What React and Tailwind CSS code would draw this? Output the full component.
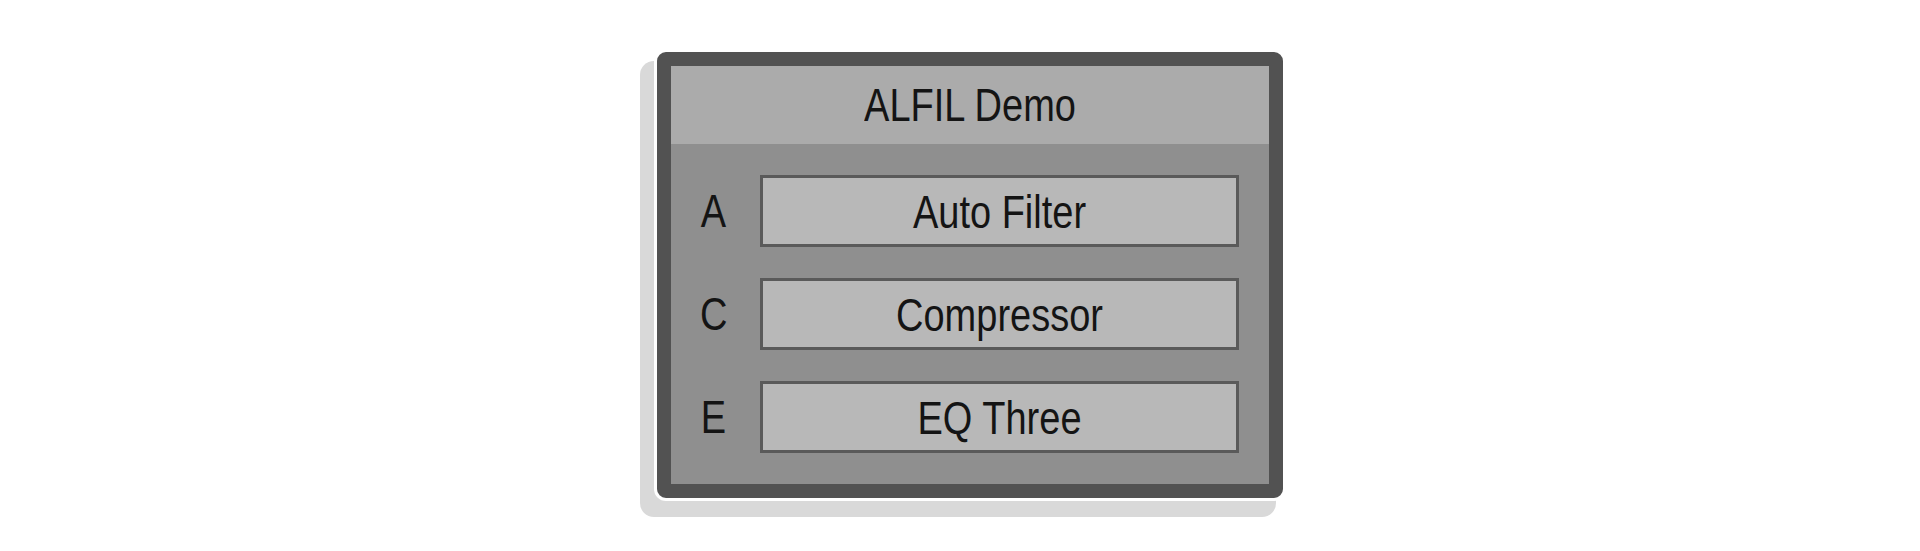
const FX_SLOTS = [
  { key: 'A', name: 'Auto Filter' },
  { key: 'C', name: 'Compressor' },
  { key: 'E', name: 'EQ Three' },
]

function Label({ children, className = '' }) {
  return (
    <span className={`inline-block origin-center scale-y-[1.2] leading-none ${className}`}>
      {children}
    </span>
  )
}

export default function App() {
  return (
    <div
      className="h-[551px] w-full bg-white pl-[657px] pt-[52px] text-[#141414]"
      style={{ fontFamily: '"Liberation Sans", Arial, sans-serif' }}
    >
      <div className="flex h-[446px] w-[626px] flex-col rounded-[9px] border-[14px] border-[#525252] shadow-[0_0_0_3px_#ffffff,-12px_14px_0_5px_#d9d9d9]">
        <div className="flex h-[78px] shrink-0 items-center justify-center bg-[#ababab] text-[38px]">
          <Label>ALFIL Demo</Label>
        </div>
        <div className="flex flex-1 flex-col gap-[31px] bg-[#8f8f8f] py-[31px] pl-[29px] pr-[30px] text-[38px]">
          {FX_SLOTS.map((slot) => (
            <div key={slot.key} className="flex h-[72px] items-center gap-[33px]">
              <div className="w-[27px] text-center">
                <Label>{slot.key}</Label>
              </div>
              <button
                type="button"
                className="flex h-full flex-1 items-center justify-center border-[3px] border-[#5a5a5a] bg-[#b8b8b8] pt-[2px]"
              >
                <Label>{slot.name}</Label>
              </button>
            </div>
          ))}
        </div>
      </div>
    </div>
  )
}
